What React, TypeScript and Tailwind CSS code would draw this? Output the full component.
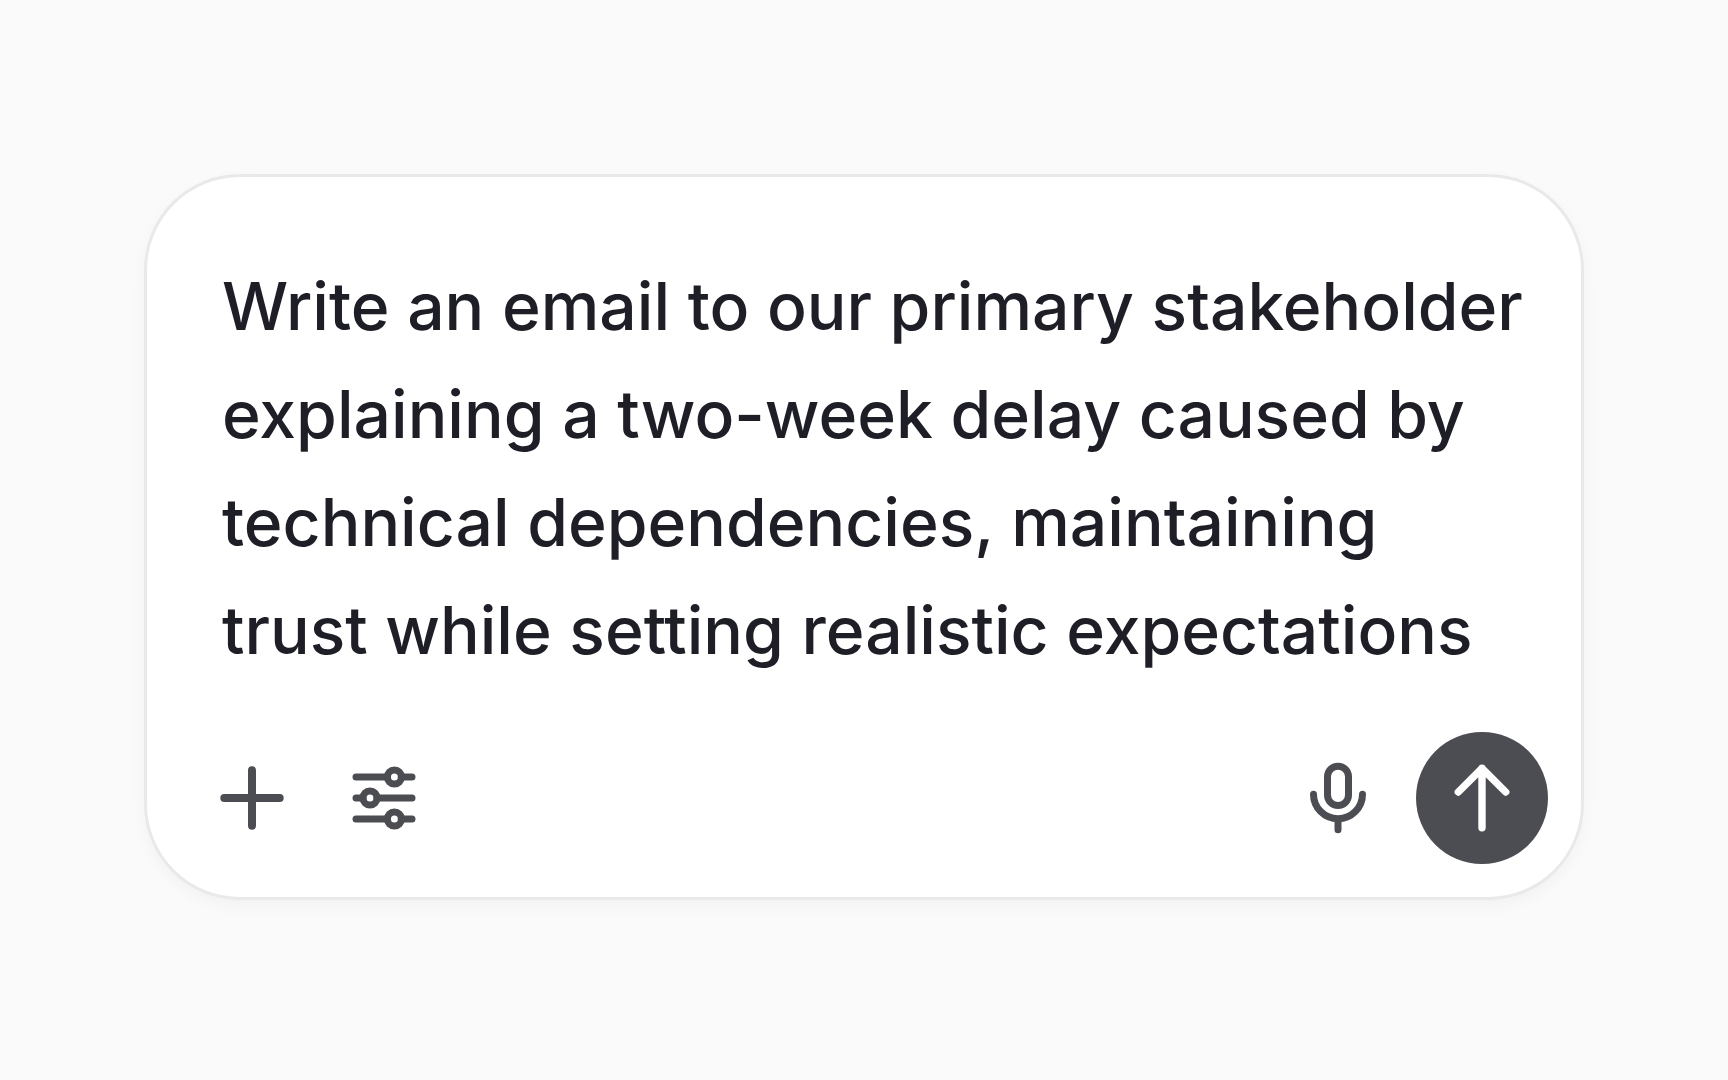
import { useState } from 'react';
import type { FormEvent, ReactNode } from 'react';

const INITIAL_PROMPT =
  'Write an email to our primary stakeholder explaining a two-week delay caused by technical dependencies, maintaining trust while setting realistic expectations';

function Icon({ strokeWidth, children }: { strokeWidth: number; children: ReactNode }) {
  return (
    <svg
      viewBox="0 0 72 72"
      className="size-18"
      fill="none"
      stroke="currentColor"
      strokeWidth={strokeWidth}
      strokeLinecap="round"
      strokeLinejoin="round"
      aria-hidden="true"
    >
      {children}
    </svg>
  );
}

function PlusIcon() {
  return (
    <Icon strokeWidth={8}>
      <path d="M36 8.3v55.4M8.3 36h55.4" />
    </Icon>
  );
}

function SlidersIcon() {
  return (
    <Icon strokeWidth={7}>
      <path d="M8 15h31.3M53.3 15H64" />
      <circle cx="46.4" cy="15" r="7" />
      <path d="M8 36h7M29 36h35" />
      <circle cx="22" cy="36" r="7" />
      <path d="M8 57h31.3M53.3 57H64" />
      <circle cx="46.4" cy="57" r="7" />
    </Icon>
  );
}

function MicIcon() {
  return (
    <Icon strokeWidth={7}>
      <rect x="25.5" y="4.2" width="21" height="39.3" rx="10.5" />
      <path d="M11.5 32.2a24.5 24.5 0 0 0 49 0M36 56.7v11" />
    </Icon>
  );
}

function ArrowUpIcon() {
  return (
    <Icon strokeWidth={7.4}>
      <path d="M12.3 30 36 6.3 59.7 30M36 6.3v59.4" />
    </Icon>
  );
}

export default function App() {
  const [prompt, setPrompt] = useState(INITIAL_PROMPT);

  const handleSubmit = (event: FormEvent) => {
    event.preventDefault();
    setPrompt('');
  };

  return (
    <div className="flex min-h-screen items-center justify-center bg-[#fafafa] px-36 pb-1.5 font-['Inter',sans-serif]">
      <form
        onSubmit={handleSubmit}
        className="w-full rounded-[96px] border-3 border-[#e9e9e9] bg-white pt-[75px] pr-[33px] pb-[33px] pl-[69px] shadow-[0_6px_16px_rgba(0,0,0,0.035)]"
      >
        <textarea
          aria-label="Prompt"
          rows={4}
          spellCheck={false}
          value={prompt}
          onChange={(event) => setPrompt(event.target.value)}
          className="block w-full resize-none overflow-hidden bg-transparent pr-[18px] pl-1.5 text-[66px] leading-[108px] font-medium text-[#1e1e26] outline-none"
        />

        {/* Toolbar */}
        <div className="mt-12 flex items-center justify-between text-[#4c4d52]">
          <div className="flex items-center gap-15">
            <button type="button" aria-label="Add attachment">
              <PlusIcon />
            </button>
            <button type="button" aria-label="Settings">
              <SlidersIcon />
            </button>
          </div>

          <div className="flex items-center gap-[42px]">
            <button type="button" aria-label="Dictate">
              <MicIcon />
            </button>
            <button
              type="submit"
              aria-label="Send"
              className="flex size-33 items-center justify-center rounded-full bg-[#4c4d52] text-white"
            >
              <ArrowUpIcon />
            </button>
          </div>
        </div>
      </form>
    </div>
  );
}
